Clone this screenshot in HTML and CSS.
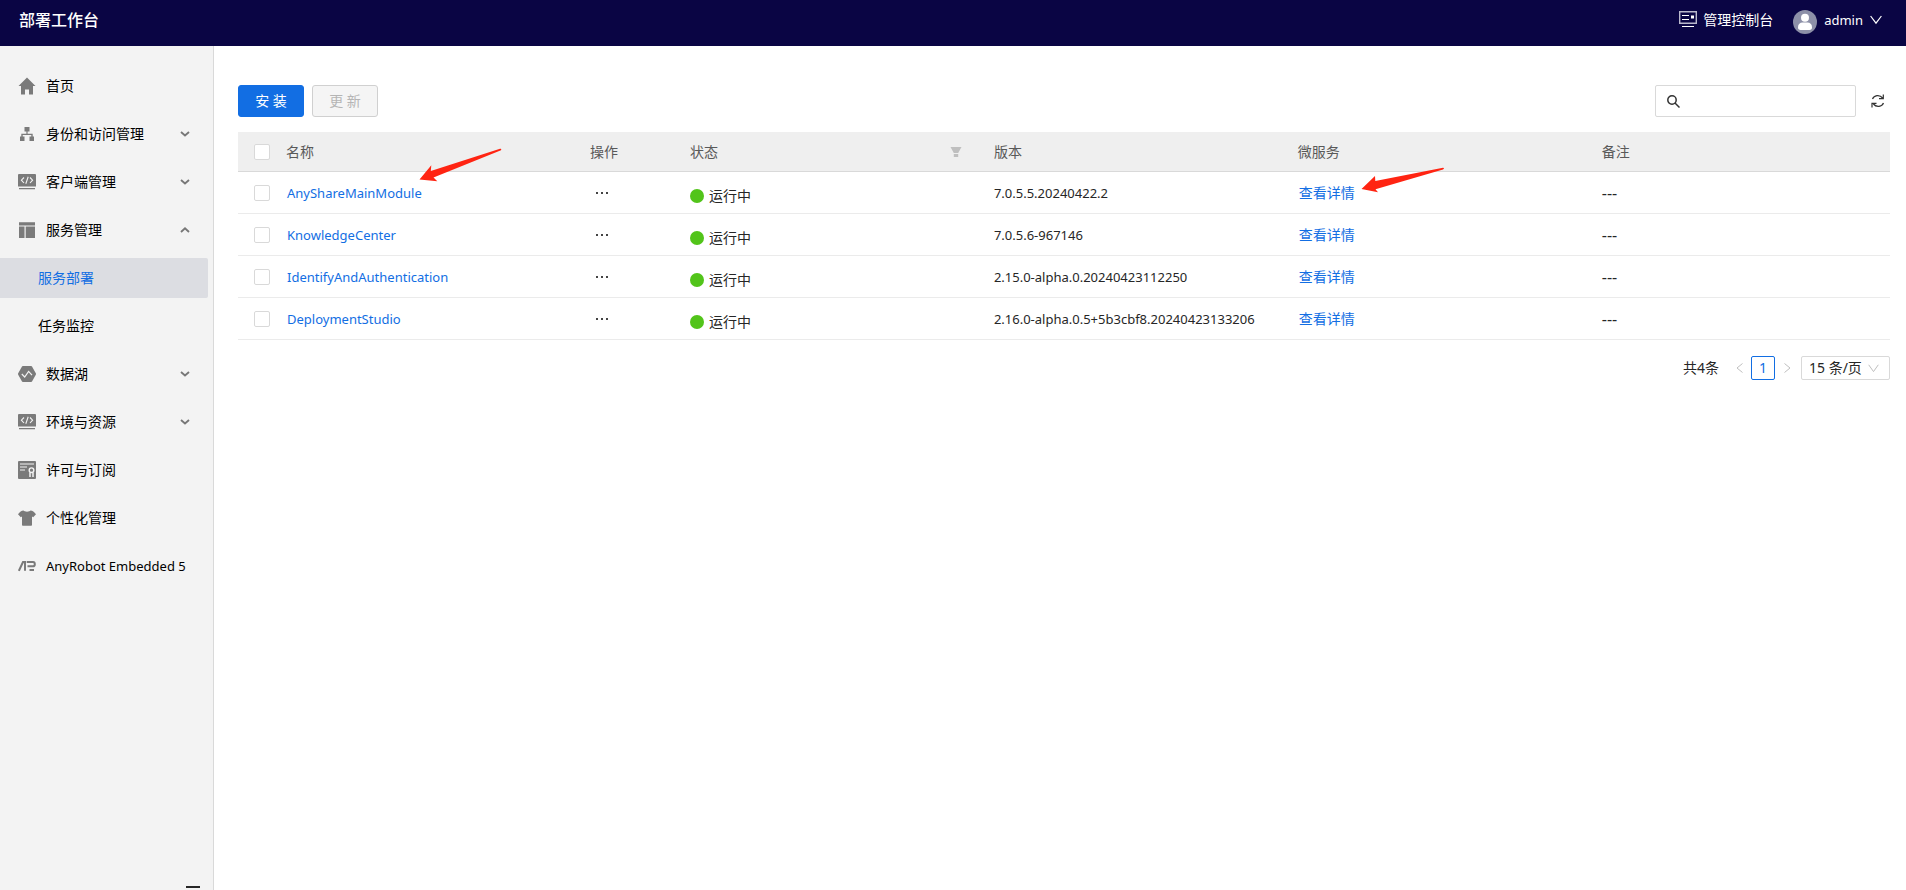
FILE: index.html
```html
<!DOCTYPE html>
<html lang="zh-CN">
<head>
<meta charset="utf-8">
<title>部署工作台</title>
<link rel="stylesheet" href="styles.css">
</head>
<body>
<svg class="sprite" aria-hidden="true">
  <symbol id="down" viewBox="0 0 10 6"><path d="M1 1l4 3.400L9 1" fill="none" stroke="#777" stroke-width="1.900"/></symbol>
  <symbol id="up" viewBox="0 0 10 6"><path d="M1 5l4-3.600L9 5" fill="none" stroke="#777" stroke-width="1.900"/></symbol>
  <symbol id="code" viewBox="0 0 18 16"><path d="M1 0h16a1 1 0 0 1 1 1v11.500H0V1a1 1 0 0 1 1-1zM1 14h16v1.300H1z" fill="#7a7a7a"/><path d="M6 3.500L3.400 6.200 6 9M12 3.500l2.600 2.700L12 9M10.200 2.800L7.800 9.700" fill="none" stroke="#f3f3f3" stroke-width="1.100"/></symbol>
  <symbol id="dots" viewBox="0 0 13 2"><path d="M0 0h2v2H0zM5 0h2v2H5zM10 0h2v2h-2z" fill="#444"/></symbol>
</svg>
<header class="topbar">
  <h1 class="brand">部署工作台</h1>
  <div class="topbar-right">
    <a class="console" href="#">
      <svg width="18" height="16" viewBox="0 0 18 16"><path d="M.7.700h16.600v11.600H.7z" fill="none" stroke="#b9b8cc" stroke-width="1.400"/><path d="M3 4h7v1H3zM3 8h7v1H3zM12 4.500h3v3h-3zM3 15h12v1H3z" fill="#fff"/></svg>
      <span>管理控制台</span>
    </a>
    <button class="user" type="button">
      <svg class="avatar" width="24" height="24" viewBox="0 0 24 24"><circle cx="12" cy="12" r="12" fill="#8d90a8"/><circle cx="12" cy="7.800" r="4" fill="#fff"/><path d="M5 17.200c0-3 2.200-4.600 4.500-4.600h5c2.300 0 4.500 1.600 4.500 4.600 0 1.800-.8 2.800-2.600 2.800H7.600C5.800 20 5 19 5 17.200z" fill="#fff"/></svg>
      <span class="latin">admin</span>
      <svg width="12" height="10" viewBox="0 0 12 10"><path d="M.6 1L6 8.200 11.400 1" fill="none" stroke="#fff" stroke-width="1.200"/></svg>
    </button>
  </div>
</header>
<div class="layout">
  <nav class="sidebar">
    <ul class="menu">
      <li><a class="item" href="#"><svg width="18" height="18" viewBox="0 0 18 18"><path d="M9 .5L17.500 9H15v8.500h-4v-5H7v5H3V9H.5z" fill="#7a7a7a"/></svg><span>首页</span></a></li>
      <li><a class="item" href="#"><svg width="18" height="18" viewBox="0 0 18 18"><path d="M6.500 2h5v4.500H9.600v2.300h5.100v2.700H16V16h-4.500v-4.500h1.800v-1.400H4.700v1.400h1.800V16H2v-4.500h1.300V8.800h5.100V6.500H6.500z" fill="#7a7a7a"/></svg><span>身份和访问管理</span><svg class="chev" width="10" height="6"><use href="#down"/></svg></a></li>
      <li><a class="item" href="#"><svg width="18" height="16"><use href="#code"/></svg><span>客户端管理</span><svg class="chev" width="10" height="6"><use href="#down"/></svg></a></li>
      <li><a class="item" href="#"><svg width="18" height="18" viewBox="0 0 18 18"><path d="M1 1.200h16v3.300H1zM1 5.500h5.500V17H1zM7.700 5.500H17V17H7.700z" fill="#7a7a7a"/></svg><span>服务管理</span><svg class="chev" width="10" height="6"><use href="#up"/></svg></a></li>
      <li><a class="item sub active" href="#">服务部署</a></li>
      <li><a class="item sub" href="#">任务监控</a></li>
      <li><a class="item" href="#"><svg width="18" height="16" viewBox="0 0 18 16"><path d="M4.800 0h8.400a1 1 0 0 1 .8.500L17.800 7.300a1.400 1.400 0 0 1 0 1.400L14 15.500a1 1 0 0 1-.8.500H4.800a1 1 0 0 1-.8-.5L.2 8.700a1.400 1.400 0 0 1 0-1.400L4 .5a1 1 0 0 1 .8-.5z" fill="#7a7a7a"/><path d="M3.800 8l2.900 3 3.900-5.600L14 9.200" fill="none" stroke="#f3f3f3" stroke-width="1.200"/></svg><span>数据湖</span><svg class="chev" width="10" height="6"><use href="#down"/></svg></a></li>
      <li><a class="item" href="#"><svg width="18" height="16"><use href="#code"/></svg><span>环境与资源</span><svg class="chev" width="10" height="6"><use href="#down"/></svg></a></li>
      <li><a class="item" href="#"><svg width="18" height="18" viewBox="0 0 18 18"><rect width="18" height="18" rx="1" fill="#7a7a7a"/><path d="M2 3h14M2 6h7M2 9h5" stroke="#f3f3f3" stroke-width="1.200"/><circle cx="13.500" cy="9.200" r="2.300" fill="none" stroke="#f3f3f3" stroke-width="1.400"/><path d="M12 11.500V16M15 11.500V16" stroke="#f3f3f3" stroke-width="1.500"/></svg><span>许可与订阅</span></a></li>
      <li><a class="item" href="#"><svg width="18" height="16" viewBox="0 0 18 16"><path d="M5.500.5C6.500 2 11.500 2 12.500.5c2 .3 3.800 1.300 5.500 3.800l-2.800 3-1.200-.7V15a.8.8 0 0 1-.8.800H4.800A.8.800 0 0 1 4 15V6.600l-1.200.7L0 4.300C1.700 1.800 3.500.8 5.500.500z" fill="#7a7a7a"/></svg><span>个性化管理</span></a></li>
      <li><a class="item" href="#"><svg width="18" height="12" viewBox="0 0 18 12"><path d="M.9 10.800L5 2H7v8.800M8.700 2H15c2.400 0 2.400 4.300 0 4.300h-4.500v1M11.500 10h4.500" fill="none" stroke="#7a7a7a" stroke-width="2"/></svg><span class="latin">AnyRobot Embedded 5</span></a></li>
    </ul>
    <button class="collapse" type="button" aria-label="收起菜单"></button>
  </nav>
  <main class="content">
    <div class="toolbar">
      <button class="btn primary" type="button">安 装</button>
      <button class="btn" type="button" disabled>更 新</button>
      <label class="search">
        <svg width="13" height="13" viewBox="0 0 13 13"><circle cx="5" cy="5" r="4.200" fill="none" stroke="#333" stroke-width="1.500"/><path d="M8 8l4.500 4.500" stroke="#333" stroke-width="1.500"/></svg>
        <input type="text" aria-label="搜索">
      </label>
      <button class="refresh" type="button" aria-label="刷新"><svg width="14" height="14" viewBox="0 0 14 14"><path d="M1.500 5C3 1.300 8.500.200 11.600 4M12.300.500v4.200H8M12.500 9C11 12.700 5.500 13.800 2.400 10M1 13.500V9.300h4.500" fill="none" stroke="#333" stroke-width="1.200"/></svg></button>
    </div>
    <table class="grid">
      <colgroup><col class="c-check"><col class="c-main"><col class="c-op"><col class="c-main"><col class="c-main"><col class="c-main"><col></colgroup>
      <thead><tr>
        <th class="check"><input type="checkbox" aria-label="全选"></th>
        <th>名称</th><th>操作</th>
        <th><div class="filter-head"><span>状态</span><svg width="12" height="10" viewBox="0 0 12 10"><path d="M.5 0h11L8.200 6H3.800zM3.800 7h4.400v3H3.800z" fill="#bfbfbf"/></svg></div></th>
        <th>版本</th><th>微服务</th><th>备注</th>
      </tr></thead>
      <tbody>
        <tr>
          <td class="check"><input type="checkbox" aria-label="AnyShareMainModule"></td>
          <td class="latin marked"><a href="#">AnyShareMainModule</a><svg class="arrow arrow-name" width="84" height="36" viewBox="0 0 84 36"><path d="M.5 31.500L12.300 17.300 11.800 23 81 .800Q83 .500 82 2.200L14.500 29.500 18.300 33.300z" fill="#ff2412"/></svg></td>
          <td><button class="more" type="button" aria-label="更多操作"><svg width="13" height="2"><use href="#dots"/></svg></button></td>
          <td class="status"><div class="state"><i class="dot"></i>运行中</div></td>
          <td class="latin">7.0.5.5.20240422.2</td>
          <td class="marked"><a href="#">查看详情</a><svg class="arrow arrow-detail" width="84" height="28" viewBox="0 0 84 28"><path d="M.5 22L14 9l.3 5L82 .800Q84 1 82 2.500L14.500 22.300 17 25.300z" fill="#ff2412"/></svg></td>
          <td class="note">---</td>
        </tr>
        <tr>
          <td class="check"><input type="checkbox" aria-label="KnowledgeCenter"></td>
          <td class="latin"><a href="#">KnowledgeCenter</a></td>
          <td><button class="more" type="button" aria-label="更多操作"><svg width="13" height="2"><use href="#dots"/></svg></button></td>
          <td class="status"><div class="state"><i class="dot"></i>运行中</div></td>
          <td class="latin">7.0.5.6-967146</td><td><a href="#">查看详情</a></td><td class="note">---</td>
        </tr>
        <tr>
          <td class="check"><input type="checkbox" aria-label="IdentifyAndAuthentication"></td>
          <td class="latin"><a href="#">IdentifyAndAuthentication</a></td>
          <td><button class="more" type="button" aria-label="更多操作"><svg width="13" height="2"><use href="#dots"/></svg></button></td>
          <td class="status"><div class="state"><i class="dot"></i>运行中</div></td>
          <td class="latin">2.15.0-alpha.0.20240423112250</td><td><a href="#">查看详情</a></td><td class="note">---</td>
        </tr>
        <tr>
          <td class="check"><input type="checkbox" aria-label="DeploymentStudio"></td>
          <td class="latin"><a href="#">DeploymentStudio</a></td>
          <td><button class="more" type="button" aria-label="更多操作"><svg width="13" height="2"><use href="#dots"/></svg></button></td>
          <td class="status"><div class="state"><i class="dot"></i>运行中</div></td>
          <td class="latin">2.16.0-alpha.0.5+5b3cbf8.20240423133206</td><td><a href="#">查看详情</a></td><td class="note">---</td>
        </tr>
      </tbody>
    </table>
    <div class="pager">
      <span class="total">共4条</span>
      <button class="step" type="button" disabled aria-label="上一页"><svg width="7" height="10" viewBox="0 0 7 10"><path d="M6.500.500L1 5l5.500 4.500" fill="none" stroke="#bfbfbf"/></svg></button>
      <button class="page" type="button">1</button>
      <button class="step" type="button" disabled aria-label="下一页"><svg width="7" height="10" viewBox="0 0 7 10"><path d="M.5.500L6 5 .5 9.500" fill="none" stroke="#bfbfbf"/></svg></button>
      <div class="size">
        <select aria-label="每页条数"><option>15 条/页</option></select>
        <svg width="11" height="9" viewBox="0 0 11 9"><path d="M.7.800L5.500 7.600 10.300.800" fill="none" stroke="#bfbfbf"/></svg>
      </div>
    </div>
  </main>
</div>
</body>
</html>
```

FILE: styles.css
```css
* { box-sizing: border-box; }

body {
  margin: 0;
  height: 100vh;
  display: flex;
  flex-direction: column;
  overflow: hidden;
  font: 14px/20px "Noto Sans", "Noto Sans CJK SC", sans-serif;
  color: #262626;
  background: #fff;
}

button, input, select { font: inherit; color: inherit; margin: 0; }
button { border: 0; padding: 0; background: none; }
a { color: #126ee3; text-decoration: none; }
svg { display: block; flex: none; }
.sprite { position: absolute; width: 0; height: 0; }
.latin { font-size: 13px; }

.topbar {
  height: 46px;
  flex: none;
  display: flex;
  justify-content: space-between;
  align-items: flex-start;
  padding: 10px 24px 0 19px;
  background: #0a0544;
  color: #fff;
}
.brand { margin: 0; font-size: 16px; line-height: 20px; font-weight: 500; }
.topbar-right { display: flex; gap: 20px; }
.console { display: flex; gap: 6px; height: 20px; color: #fff; }
.console svg { margin-top: 1px; }
.user { display: flex; align-items: flex-start; gap: 7px; height: 24px; }
.user > svg:last-child { margin-top: 5px; }

.layout { flex: 1; display: flex; min-height: 0; }

.sidebar {
  width: 214px;
  flex: none;
  display: flex;
  flex-direction: column;
  padding-top: 20px;
  background: #f3f3f3;
  border-right: 1px solid #d9d9d9;
}
.menu {
  list-style: none;
  margin: 0;
  padding: 0 5px 0 0;
  display: grid;
  grid-template-columns: minmax(0, 1fr);
  gap: 8px;
}
.item {
  display: flex;
  align-items: center;
  gap: 10px;
  height: 40px;
  padding: 0 18px;
  color: #000;
  white-space: nowrap;
}
.item.sub { padding-left: 38px; }
.item.active { background: #dcdde2; color: #126ee3; border-radius: 0 2px 2px 0; }
.chev { margin-left: auto; }
.collapse {
  width: 14px;
  height: 4px;
  margin: auto 13px 0 auto;
  border-top: 2px solid #262626;
}

.content { flex: 1; min-width: 0; padding: 39px 16px 0 24px; }

.toolbar { display: flex; align-items: center; gap: 8px; margin-bottom: 15px; }
.btn {
  width: 66px;
  height: 32px;
  border: 1px solid #d0d0d0;
  border-radius: 3px;
  background: #f5f5f5;
  color: #b5b5b5;
}
.btn.primary { background: #126ee3; border-color: #126ee3; color: #fff; }
.search {
  display: flex;
  align-items: center;
  gap: 8px;
  width: 201px;
  height: 32px;
  margin-left: auto;
  padding: 0 11px;
  border: 1px solid #d9d9d9;
  border-radius: 2px;
}
.search input { flex: 1; min-width: 0; border: 0; outline: 0; background: none; }
.refresh { margin: 0 5px 0 7px; }

.grid { width: 100%; table-layout: fixed; border-collapse: separate; border-spacing: 0; }
.c-check { width: 40px; }
.c-main { width: 18.4%; }
.c-op { width: 100px; }
.grid th, .grid td { padding: 0 8px; text-align: left; font-weight: 400; white-space: nowrap; }
.grid th { height: 40px; background: #efefef; border-bottom: 1px solid #d9d9d9; color: #595959; }
.grid td { height: 42px; border-bottom: 1px solid #ebebeb; }
.grid td a { padding-left: 1px; }
.grid .check { padding-left: 16px; }
.grid .note { font-size: 16px; }
.check input {
  appearance: none;
  display: block;
  width: 16px;
  height: 16px;
  border: 1px solid #d9d9d9;
  border-radius: 2px;
  background: #fff;
}
.filter-head { display: flex; align-items: center; justify-content: space-between; padding-right: 16px; }
.more { display: block; padding: 8px 6px; }
.grid .status { padding-top: 6px; }
.state { display: flex; align-items: center; gap: 5px; }
.dot { width: 14px; height: 14px; border-radius: 50%; background: #52c41a; }

.marked { position: relative; }
.arrow { position: absolute; pointer-events: none; z-index: 1; }
.arrow-name { left: 141px; top: -24px; }
.arrow-detail { left: 71px; top: -5px; }

.pager { display: flex; align-items: center; justify-content: flex-end; margin-top: 16px; height: 24px; }
.total { margin-right: 8px; }
.step { width: 24px; height: 24px; display: flex; align-items: center; justify-content: center; }
.page { width: 24px; height: 24px; border: 1px solid #126ee3; border-radius: 2px; color: #126ee3; line-height: 20px; }
.size { position: relative; margin-left: 2px; }
.size select {
  appearance: none;
  display: block;
  width: 89px;
  height: 24px;
  padding: 0 7px;
  border: 1px solid #d9d9d9;
  border-radius: 2px;
  background: #fff;
  line-height: 20px;
}
.size svg { position: absolute; right: 11px; top: 8px; pointer-events: none; }
```
